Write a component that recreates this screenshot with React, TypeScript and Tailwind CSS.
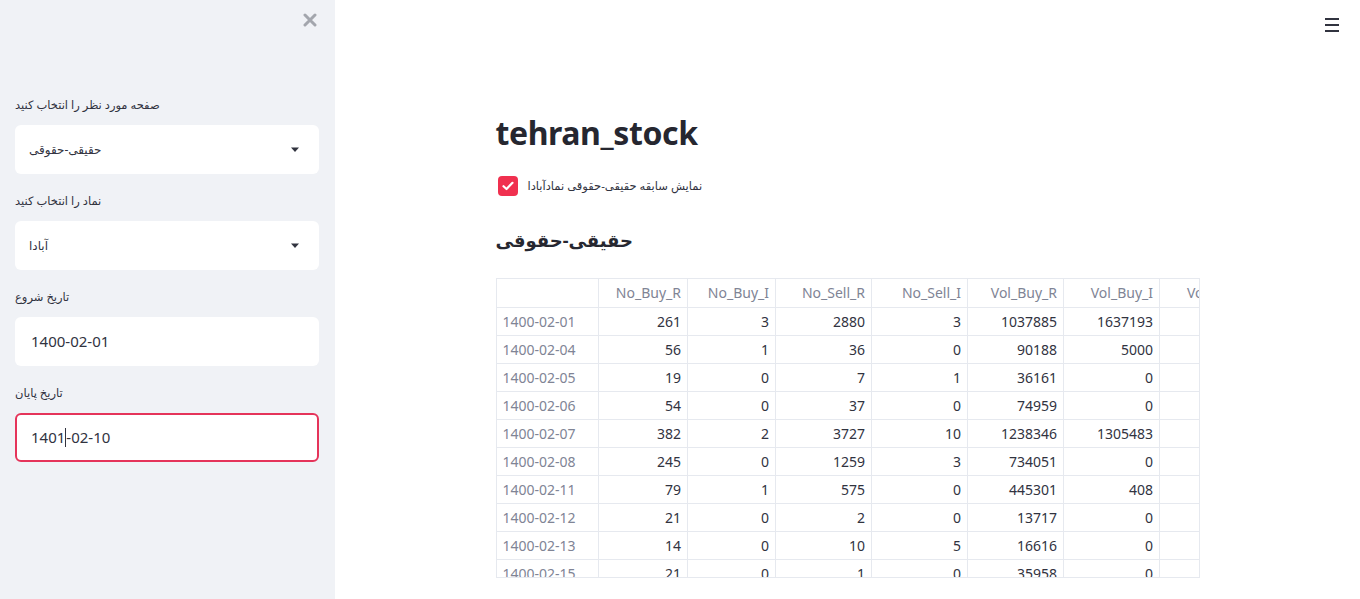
import React from 'react';

const rows = [
  ['1400-02-01', 261, 3, 2880, 3, 1037885, 1637193],
  ['1400-02-04', 56, 1, 36, 0, 90188, 5000],
  ['1400-02-05', 19, 0, 7, 1, 36161, 0],
  ['1400-02-06', 54, 0, 37, 0, 74959, 0],
  ['1400-02-07', 382, 2, 3727, 10, 1238346, 1305483],
  ['1400-02-08', 245, 0, 1259, 3, 734051, 0],
  ['1400-02-11', 79, 1, 575, 0, 445301, 408],
  ['1400-02-12', 21, 0, 2, 0, 13717, 0],
  ['1400-02-13', 14, 0, 10, 5, 16616, 0],
  ['1400-02-15', 21, 0, 1, 0, 35958, 0],
];

const columns = [
  { name: 'No_Buy_R', w: 'w-[89px]' },
  { name: 'No_Buy_I', w: 'w-[88px]' },
  { name: 'No_Sell_R', w: 'w-[96px]' },
  { name: 'No_Sell_I', w: 'w-[96px]' },
  { name: 'Vol_Buy_R', w: 'w-[96px]' },
  { name: 'Vol_Buy_I', w: 'w-[96px]' },
];

const font = { fontFamily: '"Noto Sans", "DejaVu Sans", sans-serif' };

const Caret = () => (
  <svg width="10" height="6" viewBox="0 0 10 6" className="text-[#31333f]">
    <path d="M1 0.5h8L5 5z" fill="currentColor" />
  </svg>
);

const Field: React.FC<{ label: string; children: React.ReactNode; active?: boolean }> = ({ label, children, active }) => (
  <div className="flex flex-col">
    <div className="h-5 flex items-center text-[11.5px] text-[#31333f]">{label}</div>
    <div
      className={`mt-[10px] h-[49px] rounded-md bg-white flex items-center ${
        active ? 'border-2 border-[#e5345a] pl-[14px]' : 'pl-4'
      }`}
    >
      {children}
    </div>
  </div>
);

export default function App() {
  return (
    <div className="flex w-[1360px] h-[599px] overflow-hidden bg-white" style={font}>
      {/* sidebar */}
      <aside className="w-[335px] shrink-0 bg-[#f0f2f6] pl-[15px] pr-[16px] relative">
        <button className="absolute top-[13px] right-[18px] text-[#a3a6ad]">
          <svg width="14" height="14" viewBox="0 0 14 14">
            <path d="M2 2L12 12M12 2L2 12" stroke="currentColor" strokeWidth="3" strokeLinecap="round" />
          </svg>
        </button>
        <div className="pt-[95px] flex flex-col gap-[17px]">
          <Field label="صفحه مورد نظر را انتخاب کنید">
            <div className="flex-1 flex items-center justify-between pr-[19px]">
              <span className="text-[12px] text-[#31333f] -ml-[2px]">حقیقی-حقوقی</span>
              <Caret />
            </div>
          </Field>
          <Field label="نماد را انتخاب کنید">
            <div className="flex-1 flex items-center justify-between pr-[19px]">
              <span className="text-[12px] text-[#31333f] -ml-[2px]">آبادا</span>
              <Caret />
            </div>
          </Field>
          <Field label="تاریخ شروع">
            <span className="text-[15px] text-[#31333f]">1400-02-01</span>
          </Field>
          <Field label="تاریخ پایان" active>
            <span className="text-[15px] text-[#31333f] flex items-center">
              1401<span className="inline-block w-px h-[19px] bg-[#31333f]" />-02-10
            </span>
          </Field>
        </div>
      </aside>

      {/* main */}
      <main className="flex-1 relative">
        <button className="absolute top-[18px] right-[21px] flex flex-col gap-[4px]">
          <span className="block w-[14px] h-[2px] bg-[#31333f]" />
          <span className="block w-[14px] h-[2px] bg-[#31333f]" />
          <span className="block w-[14px] h-[2px] bg-[#31333f]" />
        </button>

        <div className="w-[704px] mx-auto pt-[109px]">
          <h1 className="text-[32px] leading-[48px] font-bold text-[#262730] tracking-[-0.4px]">tehran_stock</h1>

          <label className="mt-[19px] flex items-center gap-[10px] h-5">
            <span className="w-5 h-5 rounded-[4px] bg-[#f0304f] flex items-center justify-center ml-[2px]">
              <svg width="12" height="10" viewBox="0 0 12 10">
                <path d="M1.5 5.2L4.5 8L10.5 1.8" stroke="white" strokeWidth="2.2" fill="none" strokeLinecap="round" strokeLinejoin="round" />
              </svg>
            </span>
            <span className="text-[11.5px] text-[#31333f]">نمایش سابقه حقیقی-حقوقی نمادآبادا</span>
          </label>

          <h3 className="mt-[26px] text-[18px] leading-9 font-bold text-[#262730]">حقیقی-حقوقی</h3>

          <div className="mt-[20px] h-[300px] border border-[#e6e9ef] overflow-hidden">
            <table className="w-[759px] border-collapse text-[14px] table-fixed">
              <thead>
                <tr className="h-[28px]">
                  <th className="w-[102px] border-r border-b border-[#e6e9ef]" />
                  {columns.map((c) => (
                    <th
                      key={c.name}
                      className={`${c.w} border-r border-b border-[#e6e9ef] text-right pr-[6px] font-normal text-[#808495]`}
                    >
                      {c.name}
                    </th>
                  ))}
                  <th className="w-[96px] border-b border-[#e6e9ef] text-left pl-[27px] font-normal text-[#808495] whitespace-nowrap">
                    Vol_Sell_R
                  </th>
                </tr>
              </thead>
              <tbody>
                {rows.map((r) => (
                  <tr key={r[0] as string} className="h-[28px]">
                    <td className="border-r border-b border-[#e6e9ef] pl-[6px] text-[#808495]">{r[0]}</td>
                    {r.slice(1).map((v, i) => (
                      <td key={i} className="border-r border-b border-[#e6e9ef] text-right pr-[6px] text-[#31333f]">
                        {v}
                      </td>
                    ))}
                    <td className="border-b border-[#e6e9ef]" />
                  </tr>
                ))}
              </tbody>
            </table>
          </div>
        </div>
      </main>
    </div>
  );
}
